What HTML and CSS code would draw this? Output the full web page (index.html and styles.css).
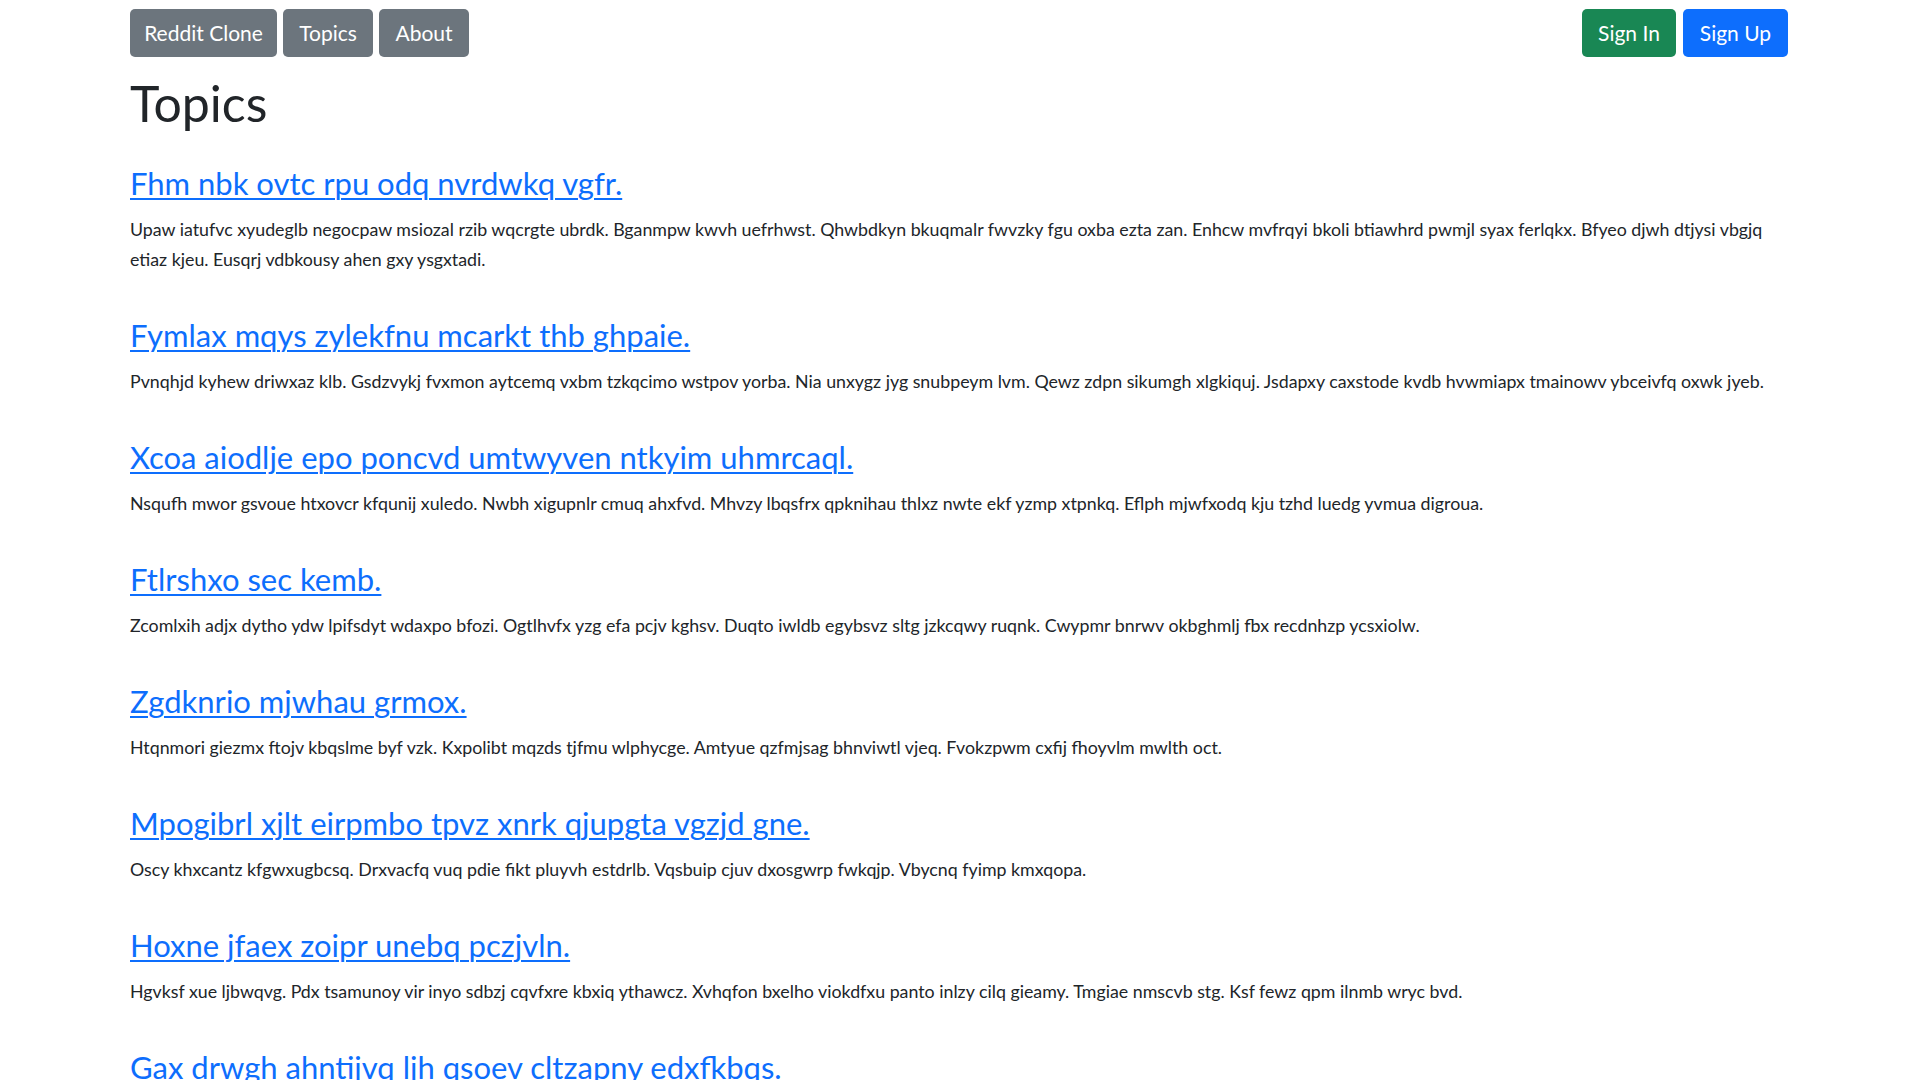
FILE: index.html
```html
<!DOCTYPE html>
<html lang="en">
<head>
<meta charset="utf-8">
<title>Topics - Reddit Clone</title>
<link rel="stylesheet" href="styles.css">
</head>
<body>
<div class="container">
  <nav class="navbar">
    <div class="nav-group">
      <a class="btn btn-secondary btn-brand" href="#">Reddit Clone</a>
      <a class="btn btn-secondary btn-topics" href="#">Topics</a>
      <a class="btn btn-secondary btn-about" href="#">About</a>
    </div>
    <div class="nav-group nav-auth">
      <a class="btn btn-success btn-signin" href="#">Sign In</a>
      <a class="btn btn-primary btn-signup" href="#">Sign Up</a>
    </div>
  </nav>

  <h1 class="page-title">Topics</h1>

  <div class="topic">
    <h4 class="topic-title"><a href="#">Fhm nbk ovtc rpu odq nvrdwkq vgfr.</a></h4>
    <p class="topic-body">Upaw iatufvc xyudeglb negocpaw msiozal rzib wqcrgte ubrdk. Bganmpw kwvh uefrhwst. Qhwbdkyn bkuqmalr fwvzky fgu oxba ezta zan. Enhcw mvfrqyi bkoli btiawhrd pwmjl syax ferlqkx. Bfyeo djwh dtjysi vbgjq etiaz kjeu. Eusqrj vdbkousy ahen gxy ysgxtadi.</p>
  </div>

  <div class="topic">
    <h4 class="topic-title"><a href="#">Fymlax mqys zylekfnu mcarkt thb ghpaie.</a></h4>
    <p class="topic-body">Pvnqhjd kyhew driwxaz klb. Gsdzvykj fvxmon aytcemq vxbm tzkqcimo wstpov yorba. Nia unxygz jyg snubpeym lvm. Qewz zdpn sikumgh xlgkiquj. Jsdapxy caxstode kvdb hvwmiapx tmainowv ybceivfq oxwk jyeb.</p>
  </div>

  <div class="topic">
    <h4 class="topic-title"><a href="#">Xcoa aiodlje epo poncvd umtwyven ntkyim uhmrcaql.</a></h4>
    <p class="topic-body">Nsqufh mwor gsvoue htxovcr kfqunij xuledo. Nwbh xigupnlr cmuq ahxfvd. Mhvzy lbqsfrx qpknihau thlxz nwte ekf yzmp xtpnkq. Eflph mjwfxodq kju tzhd luedg yvmua digroua.</p>
  </div>

  <div class="topic">
    <h4 class="topic-title"><a href="#">Ftlrshxo sec kemb.</a></h4>
    <p class="topic-body">Zcomlxih adjx dytho ydw lpifsdyt wdaxpo bfozi. Ogtlhvfx yzg efa pcjv kghsv. Duqto iwldb egybsvz sltg jzkcqwy ruqnk. Cwypmr bnrwv okbghmlj fbx recdnhzp ycsxiolw.</p>
  </div>

  <div class="topic">
    <h4 class="topic-title"><a href="#">Zgdknrio mjwhau grmox.</a></h4>
    <p class="topic-body">Htqnmori giezmx ftojv kbqslme byf vzk. Kxpolibt mqzds tjfmu wlphycge. Amtyue qzfmjsag bhnviwtl vjeq. Fvokzpwm cxfij fhoyvlm mwlth oct.</p>
  </div>

  <div class="topic">
    <h4 class="topic-title"><a href="#">Mpogibrl xjlt eirpmbo tpvz xnrk qjupgta vgzjd gne.</a></h4>
    <p class="topic-body">Oscy khxcantz kfgwxugbcsq. Drxvacfq vuq pdie fikt pluyvh estdrlb. Vqsbuip cjuv dxosgwrp fwkqjp. Vbycnq fyimp kmxqopa.</p>
  </div>

  <div class="topic">
    <h4 class="topic-title"><a href="#">Hoxne jfaex zoipr unebq pczjvln.</a></h4>
    <p class="topic-body">Hgvksf xue ljbwqvg. Pdx tsamunoy vir inyo sdbzj cqvfxre kbxiq ythawcz. Xvhqfon bxelho viokdfxu panto inlzy cilq gieamy. Tmgiae nmscvb stg. Ksf fewz qpm ilnmb wryc bvd.</p>
  </div>

  <div class="topic">
    <h4 class="topic-title"><a href="#">Gax drwgh ahntijvq ljh qsoev cltzapny edxfkbqs.</a></h4>
  </div>
</div>
</body>
</html>
```

FILE: styles.css
```css
html, body {
  margin: 0;
  padding: 0;
  background: #ffffff;
}

body {
  font-family: Lato, "Open Sans", "Noto Sans", sans-serif;
  font-size: 20px;
  line-height: 30px;
  color: #212529;
}

.container {
  width: 1658px;
  margin-left: 130px;
}

.navbar {
  display: flex;
  justify-content: space-between;
  align-items: center;
  padding-top: 9px;
}

.nav-group {
  display: flex;
  gap: 6px;
}

.nav-auth {
  gap: 7px;
}

.btn {
  display: inline-block;
  height: 48px;
  box-sizing: border-box;
  padding: 9px 0;
  text-align: center;
  font-size: 21px;
  line-height: 30px;
  color: #ffffff;
  text-decoration: none;
  border-radius: 5px;
}

.btn-brand { width: 147px; }
.btn-topics { width: 90px; }
.btn-about { width: 90px; }
.btn-signin { width: 94px; }
.btn-signup { width: 105px; }

.btn-secondary { background: #6c757d; }
.btn-success { background: #198754; }
.btn-primary { background: #0d6efd; }

.page-title {
  margin: 16px 0 32px;
  font-size: 50px;
  line-height: 60px;
  font-weight: 400;
}

.topic {
  margin-bottom: 43px;
}

.topic-title {
  margin: 0 0 13px;
  font-size: 31px;
  line-height: 36px;
  font-weight: 400;
}

.topic-title a {
  color: #0d6efd;
  text-decoration: underline;
  text-decoration-thickness: 1.5px;
  text-underline-offset: 3px;
}

.topic-body {
  margin: 0;
  font-size: 17.8px;
  line-height: 30px;
}
```
